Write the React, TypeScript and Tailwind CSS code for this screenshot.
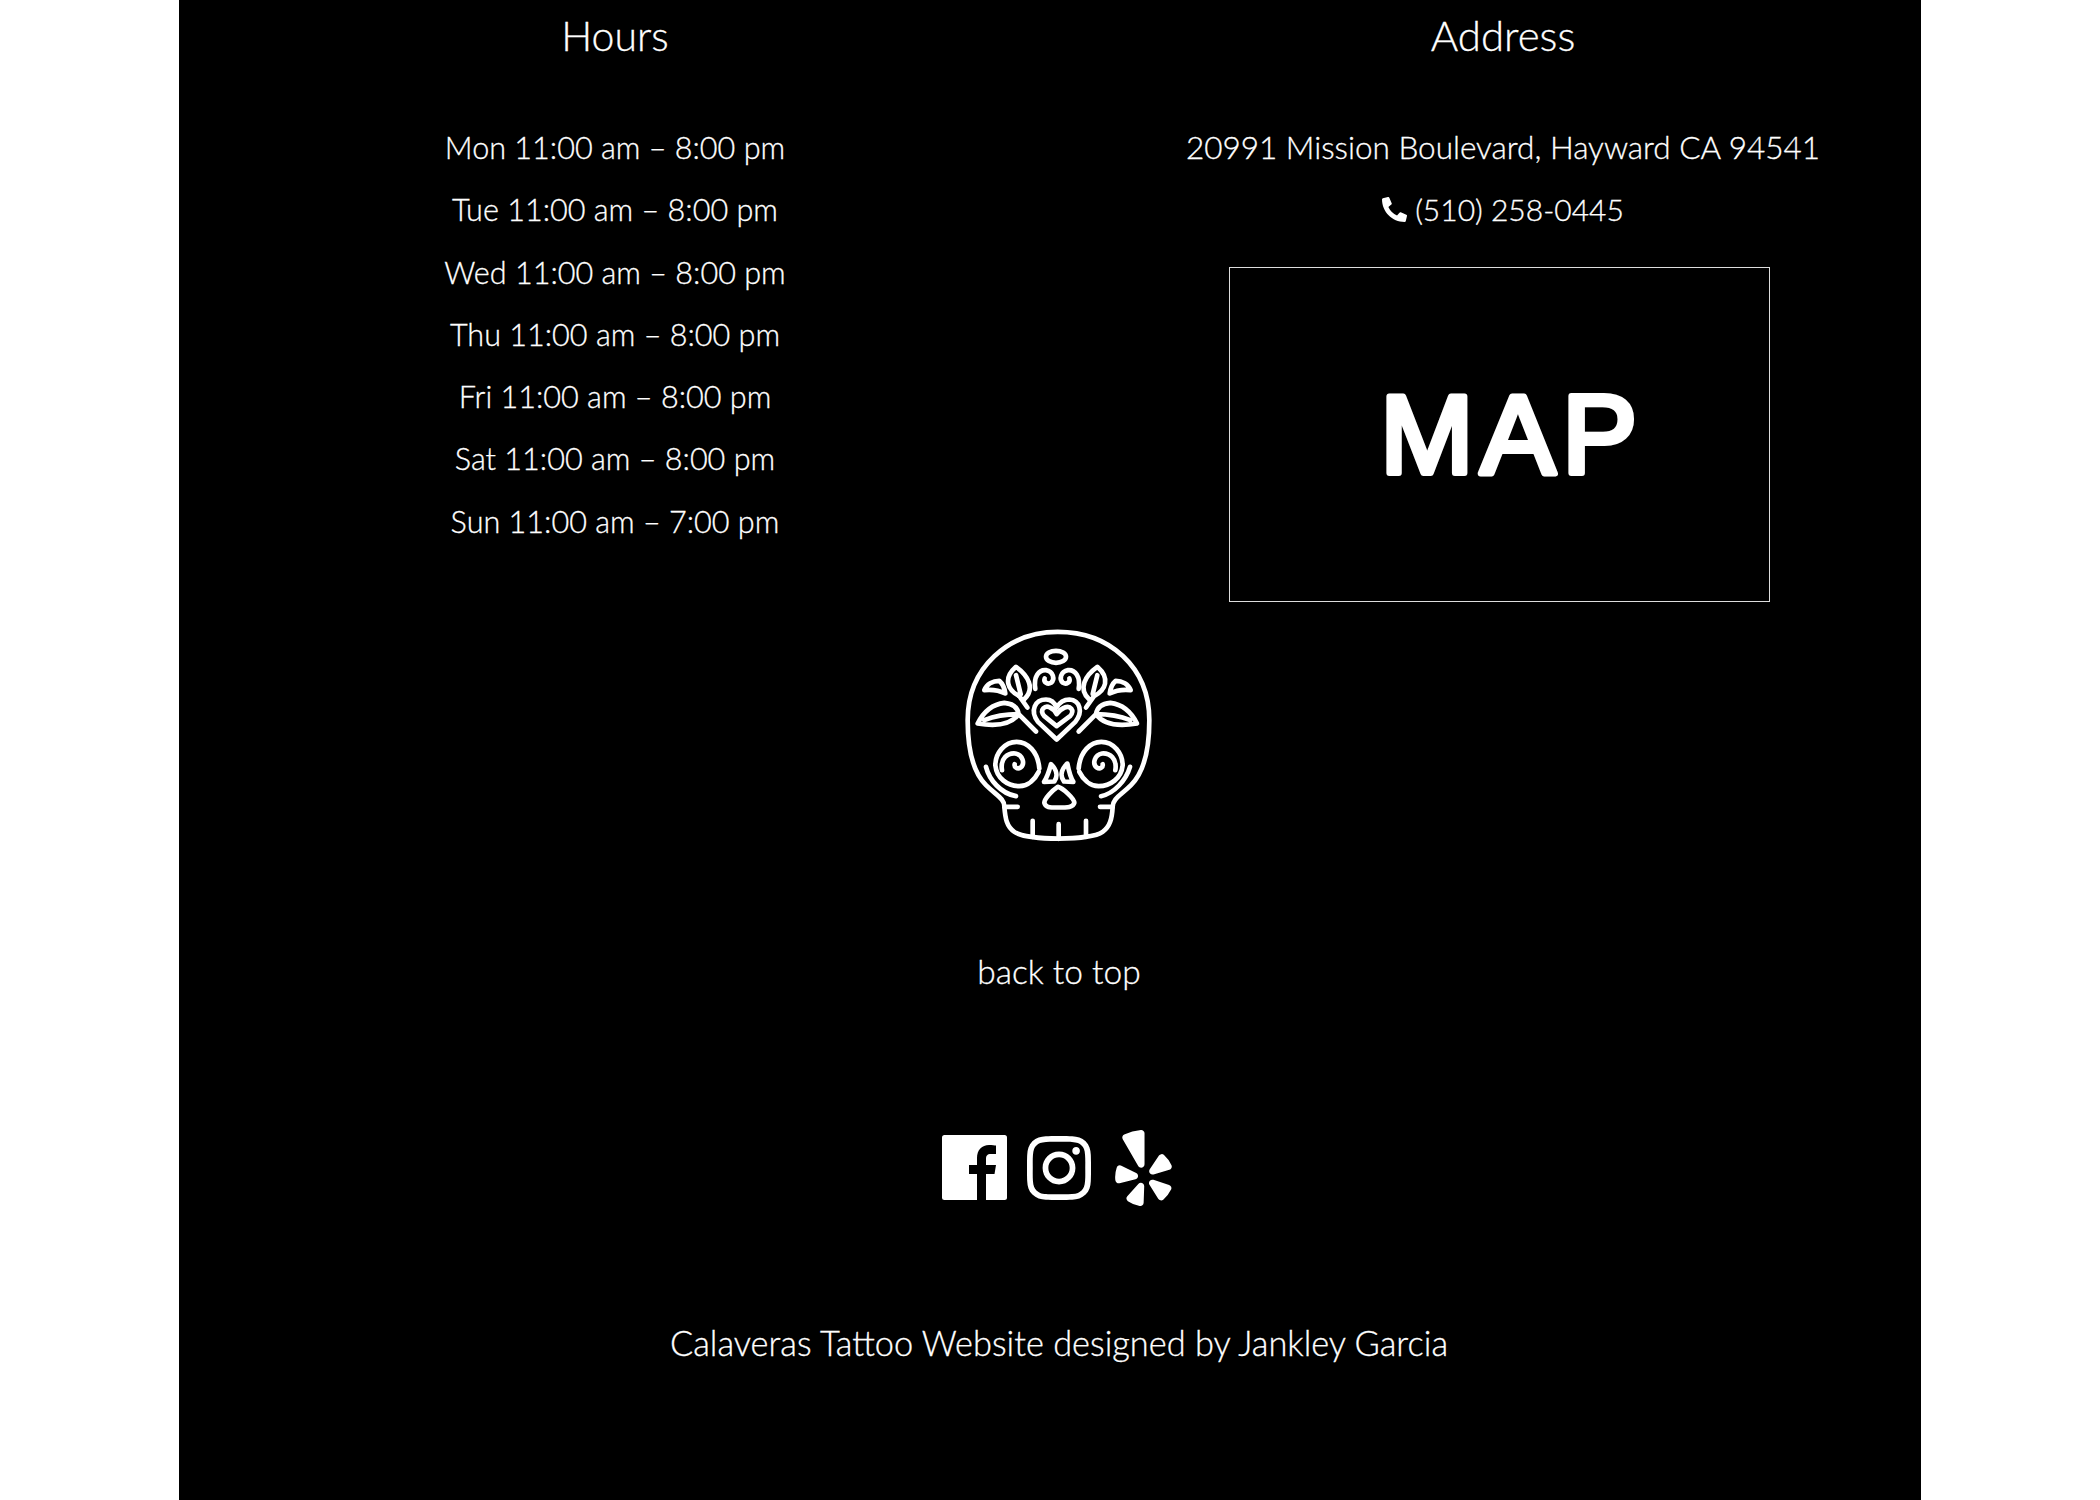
import React from 'react';
import { FaInstagram, FaPhoneAlt, FaYelp } from 'react-icons/fa';

const hours = [
  'Mon 11:00 am – 8:00 pm',
  'Tue 11:00 am – 8:00 pm',
  'Wed 11:00 am – 8:00 pm',
  'Thu 11:00 am – 8:00 pm',
  'Fri 11:00 am – 8:00 pm',
  'Sat 11:00 am – 8:00 pm',
  'Sun 11:00 am – 7:00 pm',
];

const SkullLogo = () => (
  <svg
    viewBox="59 45 600 665"
    className="h-[222px] w-[200px]"
    fill="none"
    stroke="white"
    strokeWidth="14"
    strokeLinecap="round"
    strokeLinejoin="round"
  >
    <path d="M235 590 H195 C196 565 170 555 140 525 C100 485 85 410 85 330 C85 170 210 65 355 65 C510 65 630 170 630 330 C630 410 615 485 575 525 C545 555 520 565 520 590 H482" />
    <path d="M195 590 C198 625 202 650 225 665 C265 692 450 692 490 665 C512 650 518 625 520 590" />
    <path d="M280 632 V680 M358 642 V686 M440 632 V680" />
    <ellipse cx="350" cy="140" rx="30" ry="18" />
    <path d="M288 236 C282 200 298 178 320 180 C342 184 348 208 335 218 C325 224 312 216 316 205" />
    <path d="M418 236 C424 200 408 178 386 180 C364 184 358 208 371 218 C381 224 394 216 390 205" />
    <path d="M264 292 L240 258 C205 240 190 205 230 170 C265 195 290 235 254 268 M230 195 L244 252" />
    <path d="M440 292 L464 258 C499 240 514 205 474 170 C439 195 414 235 450 268 M474 195 L460 252" />
    <path d="M135 240 C142 222 160 212 180 212 C192 222 196 236 198 250 C178 240 155 238 135 240 Z" />
    <path d="M574 240 C567 222 549 212 529 212 C517 222 513 236 511 250 C531 240 554 238 574 240 Z" />
    <path d="M290 364 L238 312 C235 292 220 280 195 278 C160 282 132 306 115 340 C150 346 210 352 238 312 M135 330 C165 318 200 312 238 312" />
    <path d="M418 364 L470 312 C473 292 488 280 513 278 C548 282 576 306 593 340 C558 346 498 352 470 312 M573 330 C543 318 508 312 470 312" />
    <path d="M352 388 L296 335 C270 300 288 268 320 268 C334 268 346 278 352 292 C360 278 374 268 390 268 C422 270 432 305 408 335 Z" />
    <path d="M352 348 L315 318 C298 298 318 285 332 292 C342 296 348 304 352 312 C358 304 366 296 376 292 C392 285 408 300 392 318 Z" />
    <path d="M300 475 C296 425 265 395 232 395 C195 395 168 430 168 465 C172 505 205 528 240 528 C268 528 288 505 298 485" />
    <path d="M188 480 C182 445 205 428 228 430 C250 434 258 460 244 472 C234 478 224 472 226 462" />
    <path d="M418 475 C422 425 453 395 486 395 C523 395 550 430 550 465 C546 505 513 528 478 528 C450 528 430 505 420 485" />
    <path d="M528 480 C534 445 511 428 488 430 C466 434 458 460 472 472 C482 478 492 472 490 462" />
    <path d="M140 470 C150 510 185 550 230 558 M572 470 C560 510 525 550 485 558" />
    <path d="M314 515 C325 500 330 480 335 462 C352 478 356 498 345 514 Z" />
    <path d="M402 515 C392 500 388 480 384 460 C365 478 362 498 374 514 Z" />
    <path d="M355 530 C340 540 315 565 315 578 C318 592 330 592 355 592 C385 592 402 592 405 578 C405 565 372 535 355 530 Z" />
  </svg>
);

const FacebookIcon = () => (
  <svg viewBox="0 0 65 65" className="h-[65px] w-[65px]">
    <rect width="65" height="65" rx="2.5" fill="white" />
    <path
      d="M35 65 V39 H27 V30 H35 V23 C35 15 40 10 47 10 C50 10 53 10.5 54 10.5 V19 H49 C45 19 44 21 44 24 V30 H54 L52.5 39 H44 V65 Z"
      fill="black"
    />
  </svg>
);

export default function App() {
  return (
    <div className="min-h-[1500px] bg-white font-['Lato',sans-serif] font-light text-white [-webkit-text-stroke:0.3px_white]">
      <footer className="mx-auto h-[1500px] w-[1742px] overflow-hidden bg-black">
        <div className="grid h-[625px] grid-cols-[872px_836px] gap-x-[34px] text-center">
          <section>
            <h2 className="flex h-[71px] items-center justify-center text-[41px] font-light">Hours</h2>
            <ul className="mt-[46px] text-[30.6px] leading-[62.3px]">
              {hours.map((line) => (
                <li key={line}>{line}</li>
              ))}
            </ul>
          </section>
          <section>
            <h2 className="flex h-[71px] items-center justify-center text-[42px] font-light">Address</h2>
            <div className="mt-[45px] leading-[62.3px]">
              <p className="text-[31.5px]">20991 Mission Boulevard, Hayward CA 94541</p>
              <p className="flex items-center justify-center gap-2 text-[30px]">
                <FaPhoneAlt className="h-[25px] w-[25px]" />
                (510) 258-0445
              </p>
            </div>
            <div className="ml-[144px] mt-[26px] h-[335px] w-[541px] border border-[#dddddd] bg-black">
              <svg viewBox="0 0 539 333" className="h-full w-full">
                <text
                  x="282"
                  y="205"
                  textAnchor="middle"
                  fill="white"
                  stroke="white"
                  strokeWidth="6"
                  strokeLinejoin="round"
                  letterSpacing="7"
                  fontFamily="'Liberation Sans', sans-serif"
                  fontWeight="400"
                  fontSize="112"
                >
                  MAP
                </text>
              </svg>
            </div>
          </section>
        </div>

        <div className="ml-[18px] flex flex-col items-center">
          <SkullLogo />
          <a className="mt-[102px] text-[33.5px] leading-[44px]">back to top</a>
          <div className="mr-[5px] mt-[137px] flex h-[75px] items-center gap-[20px]">
            <FacebookIcon />
            <FaInstagram className="h-[74px] w-[64px]" />
            <FaYelp className="ml-[4px] h-[76px] w-[57px]" />
          </div>
          <p className="mt-[116px] text-[34.4px] leading-[44px]">Calaveras Tattoo Website designed by Jankley Garcia</p>
        </div>
      </footer>
    </div>
  );
}
